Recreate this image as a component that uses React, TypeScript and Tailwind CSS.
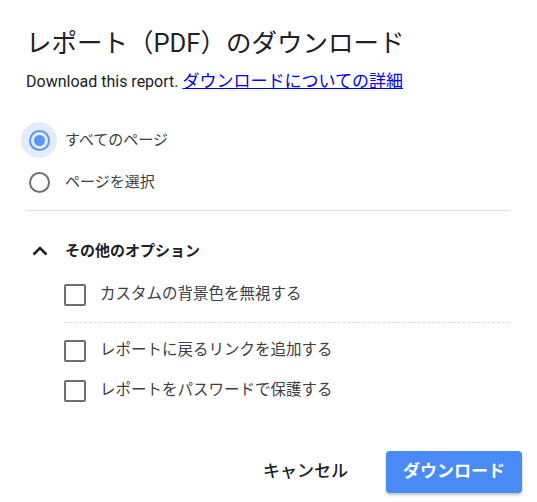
import React, { useState } from 'react';

const font = { fontFamily: 'Roboto, "Noto Sans CJK JP", sans-serif' };

const Checkbox = ({ label }: { label: string }) => {
  const [checked, setChecked] = useState(false);
  return (
    <label className="flex h-[40px] items-center cursor-pointer" onClick={() => setChecked(!checked)}>
      <span className="ml-[38px] flex h-[22px] w-[22px] items-center justify-center rounded-[2px] border-2 border-[#6f6f6f]">
        {checked && (
          <svg width="16" height="16" viewBox="0 0 24 24" fill="none" stroke="#6f6f6f" strokeWidth="3">
            <polyline points="4,12 10,18 20,6" />
          </svg>
        )}
      </span>
      <span className="ml-[14px] text-[15.5px] text-[#3c4043]">{label}</span>
    </label>
  );
};

export default function App() {
  const [page, setPage] = useState<'all' | 'select'>('all');
  const [open, setOpen] = useState(true);

  const radios = [
    { id: 'all', label: 'すべてのページ' },
    { id: 'select', label: 'ページを選択' },
  ] as const;

  return (
    <div className="w-[537px] h-[502px] bg-white pl-[26px] pr-[27px] pt-[27px]" style={font}>
      {/* タイトル */}
      <h1 className="h-[32px] text-[25.5px] leading-[32px] font-normal text-[#202124] whitespace-nowrap">
        レポート（PDF）のダウンロード
      </h1>
      <p className="mt-[10px] text-[16px] leading-[24px] text-[#202124] whitespace-nowrap">
        Download this report.{' '}
        <a href="#" className="text-[17px] text-[#0000ee] underline">ダウンロードについての詳細</a>
      </p>

      {/* ページ選択 */}
      <div className="mt-[25px]">
        {radios.map(r => {
          const active = page === r.id;
          return (
            <div key={r.id} className="flex h-[42px] items-center cursor-pointer" onClick={() => setPage(r.id)}>
              <span
                className={`-ml-[5px] flex h-[36px] w-[36px] items-center justify-center rounded-full ${active ? 'bg-[#e3ecfd]' : ''}`}
              >
                <span
                  className={`flex h-[21px] w-[21px] items-center justify-center rounded-full border-2 ${active ? 'border-[#5b96f7]' : 'border-[#6f6f6f]'}`}
                >
                  {active && <span className="h-[11px] w-[11px] rounded-full bg-[#5b96f7]" />}
                </span>
              </span>
              <span className="ml-[8px] text-[15px] text-[#3c4043]">{r.label}</span>
            </div>
          );
        })}
      </div>

      <div className="mt-[7px] border-t border-[#e0e0e0]" />

      {/* その他のオプション */}
      <button className="mt-[20px] flex h-[40px] items-center" onClick={() => setOpen(!open)}>
        <svg width="16" height="16" viewBox="0 0 16 16" className="ml-[6px]" fill="none" stroke="#202124" strokeWidth="2.6">
          <polyline points={open ? '1.5,11.5 8,5 14.5,11.5' : '1.5,5 8,11.5 14.5,5'} />
        </svg>
        <span className="ml-[17px] text-[15px] font-bold text-[#202124]">その他のオプション</span>
      </button>

      {open && (
        <div className="mt-[4px]">
          <Checkbox label="カスタムの背景色を無視する" />
          <div className="ml-[38px] mt-[7px] mb-[8px] border-t border-dashed border-[#dadada]" />
          <Checkbox label="レポートに戻るリンクを追加する" />
          <Checkbox label="レポートをパスワードで保護する" />
        </div>
      )}

      {/* ボタン */}
      <div className="mt-[40px] -mr-[12px] flex items-center justify-end gap-[22px]">
        <button className="h-[42px] px-[16px] text-[17px] font-medium text-[#202124]">キャンセル</button>
        <button className="h-[42px] w-[136px] rounded-[4px] bg-[#4a8af5] text-[17px] font-bold text-white shadow-[0_2px_3px_rgba(0,0,0,0.25)]">
          ダウンロード
        </button>
      </div>
    </div>
  );
}
